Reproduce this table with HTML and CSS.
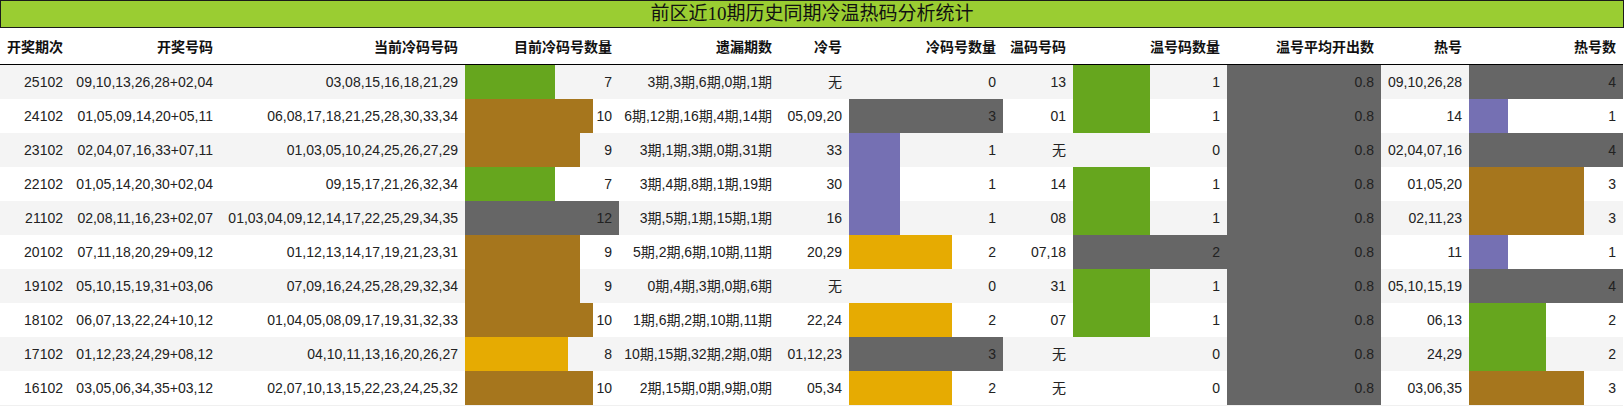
FILE: index.html
```html
<!DOCTYPE html>
<html lang="zh-CN">
<head>
<meta charset="utf-8">
<title>前区近10期历史同期冷温热码分析统计</title>
<link rel="stylesheet" href="styles.css">
</head>
<body>
<div class="report">
  <div class="title">前区近10期历史同期冷温热码分析统计</div>
  <table class="stats">
    <colgroup>
      <col class="w70"><col class="w150"><col class="w245"><col class="w154"><col class="w160"><col class="w70">
      <col class="w154"><col class="w70"><col class="w154"><col class="w154"><col class="w88"><col class="w154">
    </colgroup>
    <thead>
      <tr>
        <th>开奖期次</th><th>开奖号码</th><th>当前冷码号码</th><th>目前冷码号数量</th><th>遗漏期数</th><th>冷号</th>
        <th>冷码号数量</th><th>温码号码</th><th>温号码数量</th><th>温号平均开出数</th><th>热号</th><th>热号数</th>
      </tr>
    </thead>
    <tbody>
      <tr>
        <td>25102</td><td>09,10,13,26,28+02,04</td><td>03,08,15,16,18,21,29</td>
        <td class="bar green" style="--w:58.33%">7</td><td>3期,3期,6期,0期,1期</td><td>无</td>
        <td class="bar">0</td><td>13</td><td class="bar green" style="--w:50%">1</td>
        <td class="bar gray" style="--w:100%">0.8</td><td>09,10,26,28</td><td class="bar gray" style="--w:100%">4</td>
      </tr>
      <tr>
        <td>24102</td><td>01,05,09,14,20+05,11</td><td>06,08,17,18,21,25,28,30,33,34</td>
        <td class="bar brown" style="--w:83.33%">10</td><td>6期,12期,16期,4期,14期</td><td>05,09,20</td>
        <td class="bar gray" style="--w:100%">3</td><td>01</td><td class="bar green" style="--w:50%">1</td>
        <td class="bar gray" style="--w:100%">0.8</td><td>14</td><td class="bar purple" style="--w:25%">1</td>
      </tr>
      <tr>
        <td>23102</td><td>02,04,07,16,33+07,11</td><td>01,03,05,10,24,25,26,27,29</td>
        <td class="bar brown" style="--w:75%">9</td><td>3期,1期,3期,0期,31期</td><td>33</td>
        <td class="bar purple" style="--w:33.33%">1</td><td>无</td><td class="bar">0</td>
        <td class="bar gray" style="--w:100%">0.8</td><td>02,04,07,16</td><td class="bar gray" style="--w:100%">4</td>
      </tr>
      <tr>
        <td>22102</td><td>01,05,14,20,30+02,04</td><td>09,15,17,21,26,32,34</td>
        <td class="bar green" style="--w:58.33%">7</td><td>3期,4期,8期,1期,19期</td><td>30</td>
        <td class="bar purple" style="--w:33.33%">1</td><td>14</td><td class="bar green" style="--w:50%">1</td>
        <td class="bar gray" style="--w:100%">0.8</td><td>01,05,20</td><td class="bar brown" style="--w:75%">3</td>
      </tr>
      <tr>
        <td>21102</td><td>02,08,11,16,23+02,07</td><td>01,03,04,09,12,14,17,22,25,29,34,35</td>
        <td class="bar gray" style="--w:100%">12</td><td>3期,5期,1期,15期,1期</td><td>16</td>
        <td class="bar purple" style="--w:33.33%">1</td><td>08</td><td class="bar green" style="--w:50%">1</td>
        <td class="bar gray" style="--w:100%">0.8</td><td>02,11,23</td><td class="bar brown" style="--w:75%">3</td>
      </tr>
      <tr>
        <td>20102</td><td>07,11,18,20,29+09,12</td><td>01,12,13,14,17,19,21,23,31</td>
        <td class="bar brown" style="--w:75%">9</td><td>5期,2期,6期,10期,11期</td><td>20,29</td>
        <td class="bar yellow" style="--w:66.67%">2</td><td>07,18</td><td class="bar gray" style="--w:100%">2</td>
        <td class="bar gray" style="--w:100%">0.8</td><td>11</td><td class="bar purple" style="--w:25%">1</td>
      </tr>
      <tr>
        <td>19102</td><td>05,10,15,19,31+03,06</td><td>07,09,16,24,25,28,29,32,34</td>
        <td class="bar brown" style="--w:75%">9</td><td>0期,4期,3期,0期,6期</td><td>无</td>
        <td class="bar">0</td><td>31</td><td class="bar green" style="--w:50%">1</td>
        <td class="bar gray" style="--w:100%">0.8</td><td>05,10,15,19</td><td class="bar gray" style="--w:100%">4</td>
      </tr>
      <tr>
        <td>18102</td><td>06,07,13,22,24+10,12</td><td>01,04,05,08,09,17,19,31,32,33</td>
        <td class="bar brown" style="--w:83.33%">10</td><td>1期,6期,2期,10期,11期</td><td>22,24</td>
        <td class="bar yellow" style="--w:66.67%">2</td><td>07</td><td class="bar green" style="--w:50%">1</td>
        <td class="bar gray" style="--w:100%">0.8</td><td>06,13</td><td class="bar green" style="--w:50%">2</td>
      </tr>
      <tr>
        <td>17102</td><td>01,12,23,24,29+08,12</td><td>04,10,11,13,16,20,26,27</td>
        <td class="bar yellow" style="--w:66.67%">8</td><td>10期,15期,32期,2期,0期</td><td>01,12,23</td>
        <td class="bar gray" style="--w:100%">3</td><td>无</td><td class="bar">0</td>
        <td class="bar gray" style="--w:100%">0.8</td><td>24,29</td><td class="bar green" style="--w:50%">2</td>
      </tr>
      <tr>
        <td>16102</td><td>03,05,06,34,35+03,12</td><td>02,07,10,13,15,22,23,24,25,32</td>
        <td class="bar brown" style="--w:83.33%">10</td><td>2期,15期,0期,9期,0期</td><td>05,34</td>
        <td class="bar yellow" style="--w:66.67%">2</td><td>无</td><td class="bar">0</td>
        <td class="bar gray" style="--w:100%">0.8</td><td>03,06,35</td><td class="bar brown" style="--w:75%">3</td>
      </tr>
    </tbody>
  </table>
</div>
</body>
</html>
```
FILE: styles.css
```css
html, body {
  margin: 0;
  padding: 0;
  background: #fff;
}

.report {
  width: 1624px;
  font-family: "Liberation Sans", "Noto Sans CJK SC", sans-serif;
  font-size: 14px;
  color: #222;
}

.title {
  box-sizing: border-box;
  height: 28px;
  border: 1px solid #1a1a1a;
  background: #9acd32;
  font-family: "Liberation Serif", "Noto Sans CJK SC", serif;
  font-size: 19px;
  line-height: 26px;
  text-align: center;
  color: #111;
}

.stats {
  width: 1623px;
  table-layout: fixed;
  border-collapse: collapse;
  border-spacing: 0;
  border-bottom: 1px solid #f0f0f0;
}

.w70 { width: 70px; }
.w88 { width: 88px; }
.w150 { width: 150px; }
.w154 { width: 154px; }
.w160 { width: 160px; }
.w245 { width: 245px; }

.stats th,
.stats td {
  padding: 0 7px 0 0;
  text-align: right;
  white-space: nowrap;
  overflow: hidden;
}

.stats th {
  height: 36px;
  font-weight: bold;
  color: #111;
  border-bottom: 1px solid #000;
  background: #fff;
}

.stats td {
  height: 34px;
  line-height: 34px;
}

.stats tbody tr:nth-child(odd) {
  background-color: #f4f4f4;
}

.stats tbody tr:nth-child(even) {
  background-color: #fff;
}

.bar {
  --w: 0%;
  --c: transparent;
  background-image: linear-gradient(to right, var(--c) var(--w), transparent var(--w));
}

.green { --c: #66a61e; }
.brown { --c: #a6761d; }
.yellow { --c: #e6ab02; }
.purple { --c: #7570b3; }
.gray { --c: #666666; }
```
